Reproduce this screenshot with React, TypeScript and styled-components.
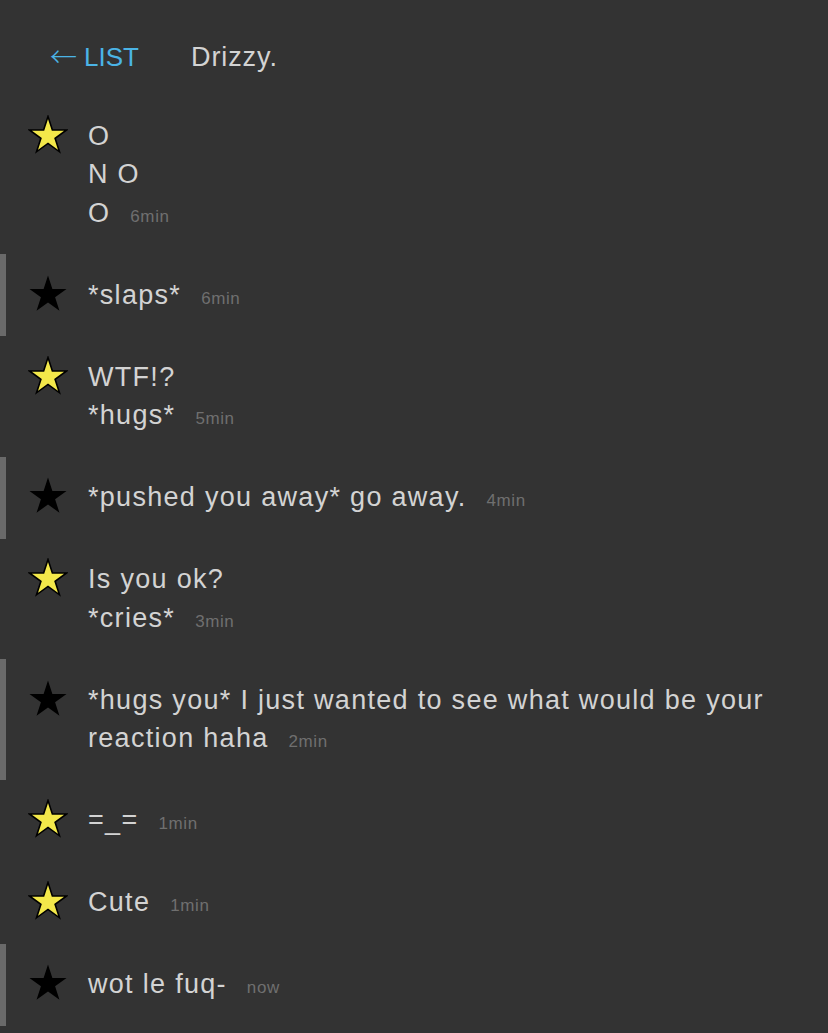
import React from "react";
import styled, { createGlobalStyle } from "styled-components";

const GlobalStyle = createGlobalStyle`
  html, body {
    margin: 0;
    padding: 0;
    background: #333333;
  }
  body {
    font-family: "Liberation Sans", Helvetica, Arial, sans-serif;
    color: #d3d3d3;
  }
`;

const Page = styled.div`
  width: 828px;
  min-height: 1033px;
  background: #333333;
  display: flex;
  flex-direction: column;
`;

const Header = styled.header`
  display: flex;
  align-items: center;
  height: 95px;
  box-sizing: border-box;
  padding: 38px 0 18px 50px;
  font-size: 26px;
  line-height: 38.5px;
`;

const BackLink = styled.a`
  width: 141px;
  color: #4bb4e6;
  text-decoration: none;
  display: flex;
  align-items: center;
  gap: 7px;
`;

const Arrow = styled.span`
  font-family: "Noto Sans CJK JP", "DejaVu Sans", sans-serif;
  font-weight: 300;
  font-size: 27px;
  line-height: 38.5px;
  display: inline-block;
  transform: translateY(-1px);
`;

const Title = styled.h1`
  margin: 0;
  font-size: 27px;
  line-height: 38.5px;
  font-weight: normal;
  color: #d3d3d3;
  letter-spacing: 0.9px;
`;

const List = styled.div`
  display: flex;
  flex-direction: column;
`;

const Row = styled.div<{ $mine: boolean }>`
  display: flex;
  align-items: flex-start;
  border-left: 6px solid ${(p) => (p.$mine ? "#6a6a6a" : "transparent")};
  padding: 21.75px 40px 21.75px 22px;
`;

const StarBox = styled.div`
  width: 40px;
  height: 38px;
  flex: none;
  margin-top: -2px;
  margin-right: 20px;
`;

const Body = styled.div`
  flex: 1;
  display: flex;
  flex-direction: column;
  font-size: 27px;
  line-height: 38.5px;
  letter-spacing: 1.3px;
  color: #d3d3d3;
`;

const Line = styled.div`
  white-space: nowrap;
`;

const Time = styled.span`
  margin-left: 20px;
  font-size: 17px;
  line-height: 1;
  letter-spacing: 0.6px;
  color: #6f6f6f;
  white-space: nowrap;
`;

const Star = ({ filled }: { filled: boolean }) => (
  <svg width="40" height="40" viewBox="0 0 40 40">
    <polygon
      points="20,1.5 24.38,14.97 38.55,14.97 27.09,23.3 31.46,36.78 20,28.45 8.54,36.78 12.91,23.3 1.45,14.97 15.62,14.97"
      fill={filled ? "#f3e84a" : "#000000"}
      stroke={filled ? "#000000" : "none"}
      strokeWidth={filled ? 1.6 : 0}
      strokeLinejoin="miter"
    />
  </svg>
);

type Message = { mine: boolean; lines: string[]; time: string };

const messages: Message[] = [
  { mine: false, lines: ["O", "N O", "O"], time: "6min" },
  { mine: true, lines: ["*slaps*"], time: "6min" },
  { mine: false, lines: ["WTF!?", "*hugs*"], time: "5min" },
  { mine: true, lines: ["*pushed you away* go away."], time: "4min" },
  { mine: false, lines: ["Is you ok?", "*cries*"], time: "3min" },
  {
    mine: true,
    lines: ["*hugs you* I just wanted to see what would be your", "reaction haha"],
    time: "2min",
  },
  { mine: false, lines: ["=_="], time: "1min" },
  { mine: false, lines: ["Cute"], time: "1min" },
  { mine: true, lines: ["wot le fuq-"], time: "now" },
];

export default function App() {
  return (
    <Page>
      <GlobalStyle />
      <Header>
        <BackLink href="#">
          <Arrow>←</Arrow>
          <span>LIST</span>
        </BackLink>
        <Title>Drizzy.</Title>
      </Header>
      <List>
        {messages.map((m, i) => (
          <Row key={i} $mine={m.mine}>
            <StarBox>
              <Star filled={!m.mine} />
            </StarBox>
            <Body>
              {m.lines.map((line, j) => (
                <Line key={j}>
                  <span>{line}</span>
                  {j === m.lines.length - 1 && <Time>{m.time}</Time>}
                </Line>
              ))}
            </Body>
          </Row>
        ))}
      </List>
    </Page>
  );
}
